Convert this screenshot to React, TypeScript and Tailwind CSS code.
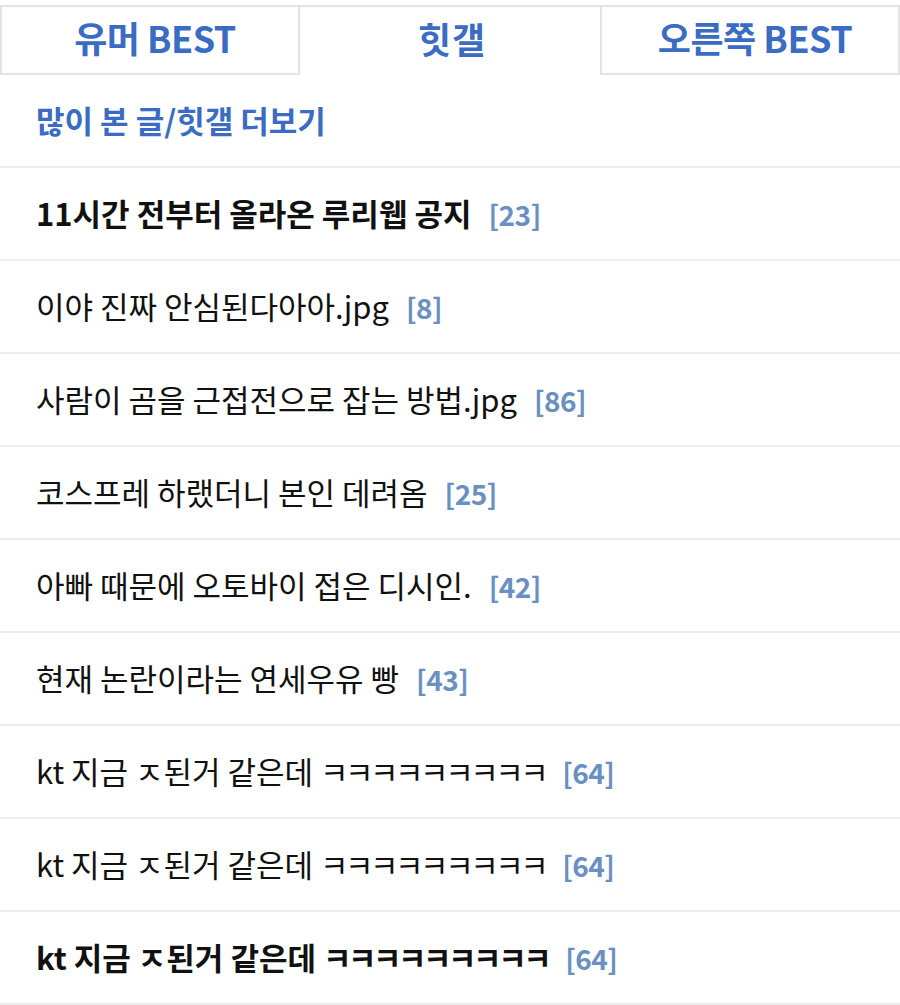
import React from "react";

type Post = {
  title: string;
  comments: number;
  bold?: boolean;
};

const posts: Post[] = [
  { title: "11시간 전부터 올라온 루리웹 공지", comments: 23, bold: true },
  { title: "이야 진짜 안심된다아아.jpg", comments: 8 },
  { title: "사람이 곰을 근접전으로 잡는 방법.jpg", comments: 86 },
  { title: "코스프레 하랬더니 본인 데려옴", comments: 25 },
  { title: "아빠 때문에 오토바이 접은 디시인.", comments: 42 },
  { title: "현재 논란이라는 연세우유 빵", comments: 43 },
  { title: "kt 지금 ㅈ된거 같은데 ㅋㅋㅋㅋㅋㅋㅋㅋㅋ", comments: 64 },
  { title: "kt 지금 ㅈ된거 같은데 ㅋㅋㅋㅋㅋㅋㅋㅋㅋ", comments: 64 },
  { title: "kt 지금 ㅈ된거 같은데 ㅋㅋㅋㅋㅋㅋㅋㅋㅋ", comments: 64, bold: true },
];

// jamo runs (ㅋㅋㅋ) render narrower in the original font
function Title({ text }: { text: string }) {
  return (
    <>
      {text.split(/(ㅋ+)/).map((part, i) =>
        /^ㅋ+$/.test(part) ? (
          <span key={i} className="tracking-[-3.5px]">
            {part}
          </span>
        ) : (
          <React.Fragment key={i}>{part}</React.Fragment>
        ),
      )}
    </>
  );
}

const tabs = ["유머 BEST", "힛갤", "오른쪽 BEST"];

export default function App() {
  return (
    <div
      className="w-[900px] h-[1005px] bg-white overflow-hidden pt-[5px]"
      style={{ fontFamily: '"Noto Sans CJK KR", "Noto Sans", sans-serif' }}
    >
      {/* Tabs */}
      <div className="flex border-t-2 border-[#e3e3e3]">
        {tabs.map((t, i) => (
          <div
            key={t}
            className={
              "w-[300px] h-[68px] flex items-center justify-center pl-[10px] pb-[6px] " +
              (i === 1 ? "" : "border-l-2 border-r-2 border-b-2 border-[#e3e3e3]")
            }
          >
            <span
              className={
                "text-[36px] font-bold text-[#3a6cc3] " +
                (i === 1 ? "tracking-[1px] pr-[6px]" : "tracking-[-0.5px]")
              }
            >
              {t}
            </span>
          </div>
        ))}
      </div>

      {/* More link */}
      <div className="h-[93px] flex items-center px-[36px] border-b-2 border-[#ececec]">
        <span className="text-[31px] font-bold text-[#3a6cc3]">
          많이 본 글/힛갤 더보기
        </span>
      </div>

      {/* List */}
      <ul>
        {posts.map((p, i) => (
          <li
            key={i}
            className="h-[93px] flex items-center px-[36px] border-b-2 border-[#ececec]"
          >
            <span
              className={
                "text-[31px] text-[#111] " + (p.bold ? "font-bold" : "font-normal")
              }
            >
              <Title text={p.title} />
            </span>
            <span className="ml-[17px] text-[28px] font-bold tracking-[-0.5px] text-[#6a8fc2]">
              [{p.comments}]
            </span>
          </li>
        ))}
      </ul>
    </div>
  );
}
